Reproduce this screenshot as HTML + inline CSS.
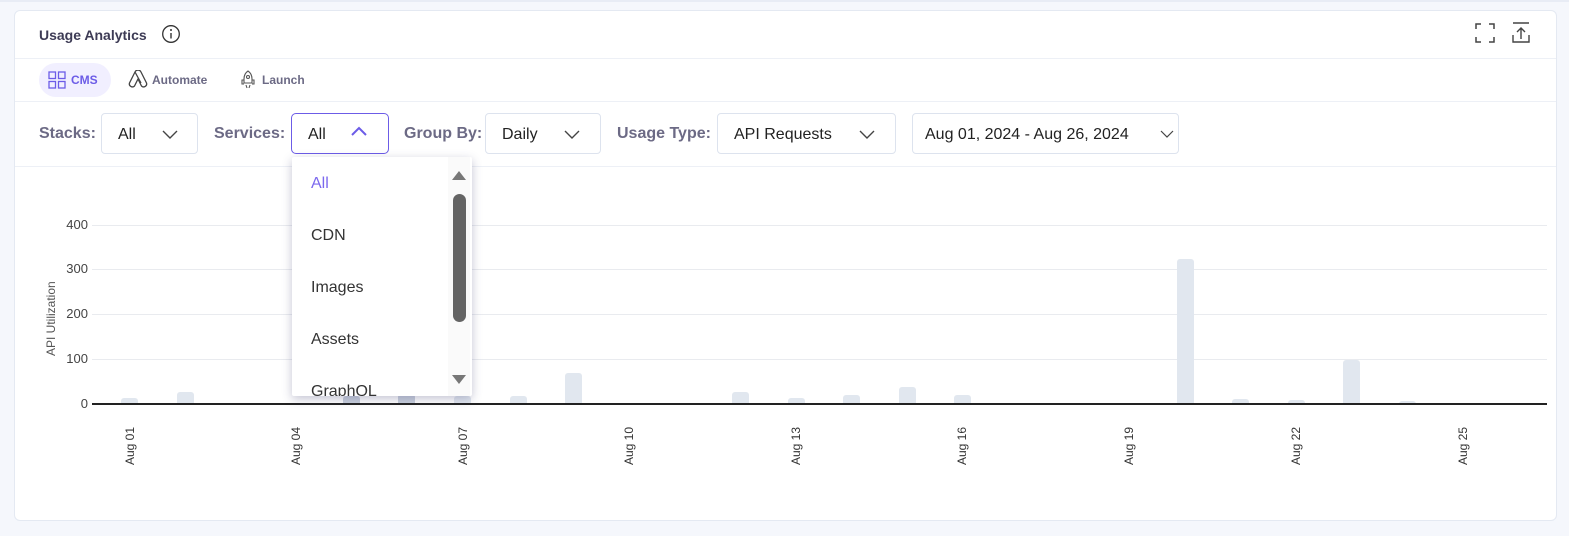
<!DOCTYPE html>
<html><head><meta charset="utf-8"><style>
*{box-sizing:border-box;margin:0;padding:0}
body{width:1569px;height:536px;background:#f5f7fc;font-family:"Liberation Sans",sans-serif;position:relative;overflow:hidden}
.a{position:absolute}
.card{left:14px;top:10px;width:1543px;height:511px;background:#fff;border:1px solid #e4e9f2;border-radius:6px}
.hl{height:1px;background:#edf0f6;left:15px;width:1541px}
.lbl{font-size:16px;color:#6c6a85;font-weight:bold}
.sel{border:1px solid #dde3ee;border-radius:4px;height:41px;top:113px;font-size:16px;color:#222;padding:12px 0 0 16px}
.chev{position:absolute;top:10px}
.g{height:1px;background:#e9ebef;left:92px;width:1455px}
.yl{font-size:13px;color:#444;width:40px;text-align:right;left:48px}
.bar{background:#e1e7ef;width:17px;border-radius:3px 3px 0 0}
.xl{font-size:12px;color:#333;transform:rotate(-90deg);transform-origin:left top;white-space:nowrap}
.it{left:311px;font-size:16px;color:#333}
</style></head><body>
<div class="a" style="left:0;top:0;width:1569px;height:2px;background:#e8ecf5"></div>
<div class="a card"></div>
<div class="a" style="left:39px;top:27px;font-size:14px;font-weight:bold;color:#3d3b55">Usage Analytics</div>
<svg class="a" style="left:161px;top:24px" width="20" height="20" viewBox="0 0 20 20"><circle cx="10" cy="10" r="8.3" fill="none" stroke="#333" stroke-width="1.3"/><line x1="10" y1="9" x2="10" y2="14.5" stroke="#333" stroke-width="1.4"/><circle cx="10" cy="6" r="1" fill="#333"/></svg>
<svg class="a" style="left:1475px;top:23px" width="20" height="20" viewBox="0 0 20 20" fill="none" stroke="#444" stroke-width="1.5"><path d="M1 6V1h5M14 1h5v5M19 14v5h-5M6 19H1v-5"/></svg>
<svg class="a" style="left:1511px;top:22px" width="20" height="22" viewBox="0 0 20 22" fill="none" stroke="#444" stroke-width="1.4"><path d="M2 1h16M10 6v11M6 10l4-4 4 4M2 13v7h16v-7"/></svg>
<div class="a hl" style="top:58px"></div>
<div class="a" style="left:39px;top:63px;width:72px;height:34px;border-radius:17px;background:#f1efff"></div>
<svg class="a" style="left:48px;top:71px" width="18" height="18" viewBox="0 0 18 18" fill="none" stroke="#6c5ce7" stroke-width="1.3"><rect x="1" y="1" width="6.5" height="6.5"/><rect x="10.5" y="1" width="6.5" height="6.5"/><rect x="1" y="10.5" width="6.5" height="6.5"/><rect x="10.5" y="10.5" width="6.5" height="6.5"/></svg>
<div class="a" style="left:71px;top:73px;font-size:12px;font-weight:bold;color:#6c5ce7">CMS</div>
<svg class="a" style="left:128px;top:70px" width="20" height="19" viewBox="0 0 20 19" fill="none" stroke="#444" stroke-width="1.3"><path d="M7 2l-5.5 11a3 3 0 005 3L10 9l3.5 7a3 3 0 005-3L13 2a3.3 3.3 0 00-6 0zM7 2l6 11"/></svg>
<div class="a" style="left:152px;top:73px;font-size:12px;font-weight:bold;color:#6c6a85">Automate</div>
<svg class="a" style="left:241px;top:70px" width="14" height="19" viewBox="0 0 14 19" fill="none" stroke="#555" stroke-width="1.1"><path d="M7 1c3 2 4 5 4 8v4H3V9c0-3 1-6 4-8zM3 10H1v4h2M11 10h2v4h-2M5 15l1 3M9 15l-1 3"/><circle cx="7" cy="7" r="1.5"/></svg>
<div class="a" style="left:262px;top:73px;font-size:12px;font-weight:bold;color:#6c6a85">Launch</div>
<div class="a hl" style="top:101px"></div>

<div class="a lbl" style="left:39px;top:125px">Stacks:</div>
<div class="a sel" style="left:101px;width:97px">All<svg class="chev" style="left:58px" width="20" height="20" viewBox="0 0 20 20" fill="none" stroke="#444" stroke-width="1.4"><path d="M3 7l7 7 7-7"/></svg></div>
<div class="a lbl" style="left:214px;top:125px">Services:</div>
<div class="a sel" style="left:291px;width:98px;border:1.5px solid #6c5ce7;border-radius:5px">All<svg class="chev" style="left:57px;top:8px" width="20" height="20" viewBox="0 0 20 20" fill="none" stroke="#6c5ce7" stroke-width="2"><path d="M3 13l7-7 7 7"/></svg></div>
<div class="a lbl" style="left:404px;top:125px">Group By:</div>
<div class="a sel" style="left:485px;width:116px">Daily<svg class="chev" style="left:76px" width="20" height="20" viewBox="0 0 20 20" fill="none" stroke="#444" stroke-width="1.4"><path d="M3 7l7 7 7-7"/></svg></div>
<div class="a lbl" style="left:617px;top:125px">Usage Type:</div>
<div class="a sel" style="left:717px;width:179px">API Requests<svg class="chev" style="left:139px" width="20" height="20" viewBox="0 0 20 20" fill="none" stroke="#444" stroke-width="1.4"><path d="M3 7l7 7 7-7"/></svg></div>
<div class="a sel" style="left:912px;width:267px;padding-left:12px">Aug 01, 2024 - Aug 26, 2024<svg class="chev" style="left:246px;top:10px" width="16" height="20" viewBox="0 0 16 20" fill="none" stroke="#444" stroke-width="1.2"><path d="M2 7l6 6 6-6"/></svg></div>
<div class="a hl" style="top:166px"></div>

<div class="a g" style="top:225px"></div><div class="a g" style="top:269px"></div><div class="a g" style="top:314px"></div><div class="a g" style="top:359px"></div>
<div class="a yl" style="top:217px">400</div><div class="a yl" style="top:261px">300</div><div class="a yl" style="top:306px">200</div><div class="a yl" style="top:351px">100</div><div class="a yl" style="top:396px">0</div>
<div class="a" style="left:44px;top:356px;font-size:12px;color:#555;transform:rotate(-90deg);transform-origin:left top;white-space:nowrap">API Utilization</div>

<div class="a bar" style="left:121px;top:398px;height:6px"></div>
<div class="a bar" style="left:177px;top:392px;height:12px"></div>
<div class="a bar" style="left:343px;top:396px;height:8px;background:#c9d0dd"></div>
<div class="a bar" style="left:398px;top:394px;height:10px;background:#c9d0dd"></div>
<div class="a bar" style="left:454px;top:396px;height:8px"></div>
<div class="a bar" style="left:510px;top:396px;height:8px"></div>
<div class="a bar" style="left:565px;top:373px;height:31px"></div>
<div class="a bar" style="left:732px;top:392px;height:12px"></div>
<div class="a bar" style="left:788px;top:398px;height:6px"></div>
<div class="a bar" style="left:843px;top:395px;height:9px"></div>
<div class="a bar" style="left:899px;top:387px;height:17px"></div>
<div class="a bar" style="left:954px;top:395px;height:9px"></div>
<div class="a bar" style="left:1177px;top:259px;height:145px"></div>
<div class="a bar" style="left:1232px;top:399px;height:5px"></div>
<div class="a bar" style="left:1288px;top:400px;height:4px"></div>
<div class="a bar" style="left:1343px;top:360px;height:44px"></div>
<div class="a bar" style="left:1399px;top:401px;height:3px"></div>
<div class="a" style="left:92px;top:403px;width:1455px;height:1.5px;background:#222"></div>

<div class="a xl" style="left:123px;top:465px">Aug 01</div>
<div class="a xl" style="left:289px;top:465px">Aug 04</div>
<div class="a xl" style="left:456px;top:465px">Aug 07</div>
<div class="a xl" style="left:622px;top:465px">Aug 10</div>
<div class="a xl" style="left:789px;top:465px">Aug 13</div>
<div class="a xl" style="left:955px;top:465px">Aug 16</div>
<div class="a xl" style="left:1122px;top:465px">Aug 19</div>
<div class="a xl" style="left:1289px;top:465px">Aug 22</div>
<div class="a xl" style="left:1456px;top:465px">Aug 25</div>

<div class="a" style="left:292px;top:157px;width:180px;height:239px;background:#fff;box-shadow:0 3px 10px rgba(60,60,110,.3);overflow:hidden;border-radius:2px">
<div class="a" style="left:156px;top:0;width:22px;height:239px;background:#fafafa"></div>
<svg class="a" style="left:159px;top:12px" width="16" height="12"><path d="M1 11L8 2l7 9z" fill="#777"/></svg>
<div class="a" style="left:161px;top:37px;width:13px;height:128px;border-radius:7px;background:#646464"></div>
<svg class="a" style="left:159px;top:217px" width="16" height="12"><path d="M1 1h14L8 10z" fill="#777"/></svg>
<div class="a it" style="left:19px;top:18px;color:#7b68ee">All</div>
<div class="a it" style="left:19px;top:70px">CDN</div>
<div class="a it" style="left:19px;top:122px">Images</div>
<div class="a it" style="left:19px;top:174px">Assets</div>
<div class="a it" style="left:19px;top:226px">GraphQL</div>
</div>
</body></html>
